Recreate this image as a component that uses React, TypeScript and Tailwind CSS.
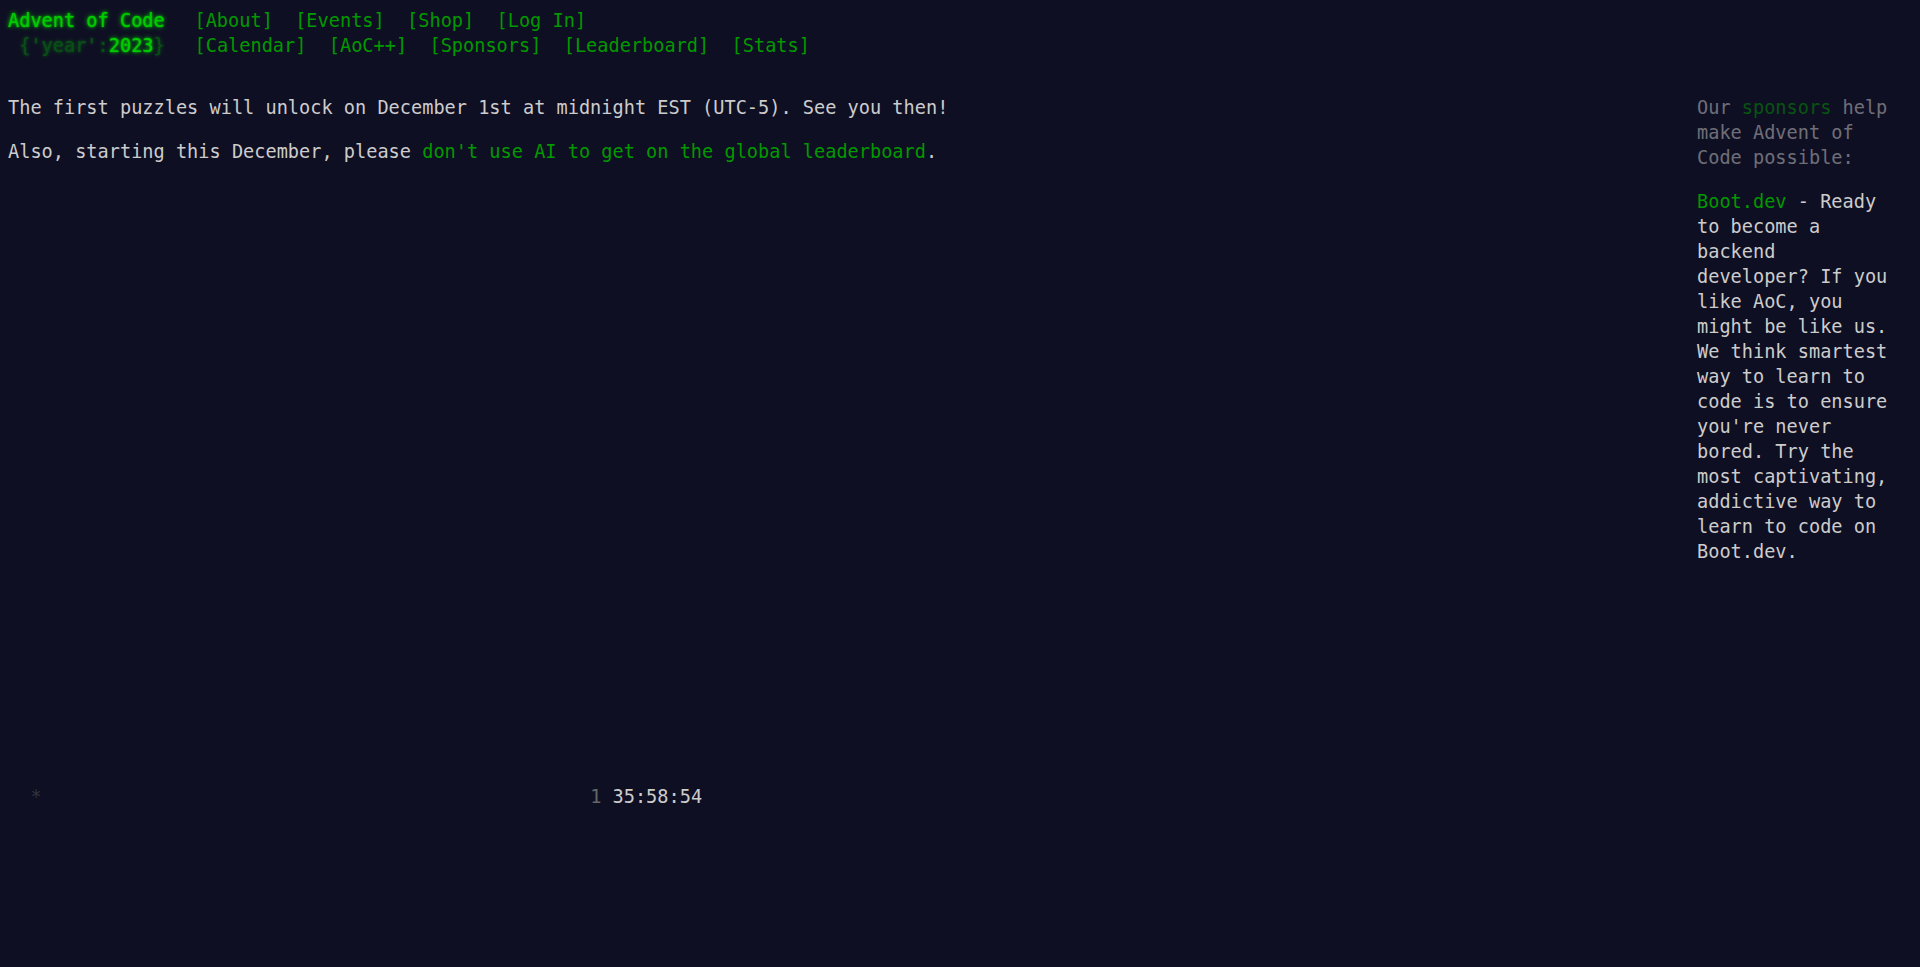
const glow = "text-[#00cc00] [text-shadow:0_0_2px_#00cc00,0_0_5px_#00cc00]";

const NavItem = ({ label }: { label: string }) => (
  <li className="px-[0.6em]">
    <a className="inline-block h-[1.3em] text-[#009900]">{label}</a>
  </li>
);

export default function App() {
  return (
    <div className="min-h-[967px] bg-[#0f0f23] px-2 pt-[9px] pb-2 font-['DejaVu_Sans_Mono',monospace] text-[18.6px] text-[#cccccc]">
      <header className="mb-[2em] whitespace-nowrap leading-[24.5px]">
        <div className="flex">
          <h1 className="pr-[1em]">
            <a className={glow}>Advent of Code</a>
          </h1>
          <ul className="flex">
            <NavItem label="[About]" />
            <NavItem label="[Events]" />
            <NavItem label="[Shop]" />
            <NavItem label="[Log In]" />
          </ul>
        </div>
        <div className="flex">
          <h1 className="whitespace-pre pr-[1em]">
            {" "}
            <span className={glow + " opacity-[.33]"}>{"{'year':"}</span>
            <a className={glow}>2023</a>
            <span className={glow + " opacity-[.33]"}>{"}"}</span>
          </h1>
          <ul className="flex">
            <NavItem label="[Calendar]" />
            <NavItem label="[AoC++]" />
            <NavItem label="[Sponsors]" />
            <NavItem label="[Leaderboard]" />
            <NavItem label="[Stats]" />
          </ul>
        </div>
      </header>

      <div className="flex justify-between leading-[25px]">
        <main>
          <p>The first puzzles will unlock on December 1st at midnight EST (UTC-5). See you then!</p>
          <p className="mt-[1em]">
            Also, starting this December, please{" "}
            <a className="text-[#009900]">don't use AI to get on the global leaderboard</a>.
          </p>
          <pre className="mt-[620px] font-['DejaVu_Sans_Mono',monospace] leading-[25px]">
            <span className="text-[#333340]">{"  *"}</span>
            {"                                                 "}
            <span className="text-[#666666]">1</span> <span className="text-[#cccccc]">35:58:54</span>
          </pre>
        </main>

        <aside className="mr-[15px] w-[200px] shrink-0">
          <p className="opacity-50">
            Our <a className="text-[#009900]">sponsors</a> help make Advent of Code possible:
          </p>
          <div className="mt-[1em]">
            <a className="text-[#009900]">Boot.dev</a> - Ready to become a backend developer? If you like AoC, you
            might be like us. We think smartest way to learn to code is to ensure you're never bored. Try the most
            captivating, addictive way to learn to code on Boot.dev.
          </div>
        </aside>
      </div>
    </div>
  );
}
